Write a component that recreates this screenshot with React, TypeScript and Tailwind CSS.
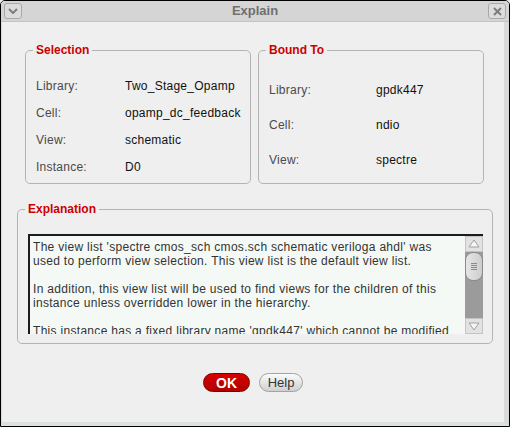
import React from 'react'

const selection = [
  ['Library:', 'Two_Stage_Opamp'],
  ['Cell:', 'opamp_dc_feedback'],
  ['View:', 'schematic'],
  ['Instance:', 'D0'],
]

const boundTo = [
  ['Library:', 'gpdk447'],
  ['Cell:', 'ndio'],
  ['View:', 'spectre'],
]

const explanation = [
  "The view list 'spectre cmos_sch cmos.sch schematic veriloga ahdl' was",
  'used to perform view selection. This view list is the default view list.',
  '',
  'In addition, this view list will be used to find views for the children of this',
  'instance unless overridden lower in the hierarchy.',
  '',
  "This instance has a fixed library name 'gpdk447' which cannot be modified",
]

function TitleButton({ children }: { children: React.ReactNode }) {
  return (
    <div className="w-[18px] h-[16px] rounded-[3px] border border-[#a9a9a9] bg-[#dcdcdc] flex items-center justify-center">
      {children}
    </div>
  )
}

function Group({
  title,
  className = '',
  children,
}: {
  title: string
  className?: string
  children: React.ReactNode
}) {
  return (
    <fieldset className={`border border-[#b4b4b4] rounded-[5px] ${className}`}>
      <legend className="ml-[7px] px-[3px] text-[12px] leading-[14px] font-bold text-[#cc0000]">
        {title}
      </legend>
      {children}
    </fieldset>
  )
}

function Scrollbar() {
  return (
    <div className="w-[18px] flex flex-col bg-[#9b9b9b]">
      <div className="h-[16px] bg-[#e2e2e2] border border-[#c4c4c4] flex items-center justify-center">
        <svg width="12" height="10" viewBox="0 0 12 10">
          <polygon points="6,1 11,8 1,8" fill="#f6f6f6" stroke="#a0a0a0" strokeWidth="1" />
        </svg>
      </div>
      <div className="h-[29px] rounded-[8px] border border-[#8a8a8a] bg-gradient-to-r from-[#e6e6e6] to-[#cdcdcd] flex flex-col items-center justify-center gap-[1px]">
        <div className="w-[6px] h-px bg-[#8a8a8a]" />
        <div className="w-[6px] h-px bg-[#8a8a8a]" />
        <div className="w-[6px] h-px bg-[#8a8a8a]" />
        <div className="w-[6px] h-px bg-[#8a8a8a]" />
      </div>
      <div className="flex-1" />
      <div className="h-[16px] bg-[#e2e2e2] border border-[#c4c4c4] flex items-center justify-center">
        <svg width="12" height="10" viewBox="0 0 12 10">
          <polygon points="1,2 11,2 6,9" fill="#f6f6f6" stroke="#a0a0a0" strokeWidth="1" />
        </svg>
      </div>
    </div>
  )
}

export default function App() {
  return (
    <div className="w-[510px] h-[427px] bg-[#efefef] font-['Liberation_Sans',Arial,sans-serif]">
      <div className="h-full flex flex-col border border-black rounded-t-[5px] overflow-hidden">
        {/* Title bar */}
        <div className="relative h-[21px] shrink-0 flex items-center justify-between px-[3px] bg-[#d5d5d5] border-b border-[#c3c3c3]">
          <TitleButton>
            <svg width="10" height="6" viewBox="0 0 10 6">
              <path d="M1 1 L5 5 L9 1" fill="none" stroke="#7c7c7c" strokeWidth="2" />
            </svg>
          </TitleButton>
          <span className="text-[13px] font-bold text-[#6f6f6f]">Explain</span>
          <TitleButton>
            <svg width="9" height="9" viewBox="0 0 9 9">
              <path d="M1 1 L8 8 M8 1 L1 8" fill="none" stroke="#7c7c7c" strokeWidth="2" />
            </svg>
          </TitleButton>
        </div>

        {/* Body */}
        <div className="flex-1 flex flex-col border-l border-l-[#d6dad6] border-r-[5px] border-r-[#d9dbd9] border-b-[4px] border-b-[#dde1dd]">
          <div className="flex gap-[7px] ml-[23px] mt-[21px]">
            <Group title="Selection" className="w-[226px] h-[141px]">
              <div className="pt-[15px] pl-[10px] flex flex-col text-[12px] tracking-[0.25px]">
                {selection.map(([k, v]) => (
                  <div key={k} className="h-[27px] flex items-center">
                    <span className="w-[89px] text-[#4a4a4a]">{k}</span>
                    <span className="text-[#111]">{v}</span>
                  </div>
                ))}
              </div>
            </Group>
            <Group title="Bound To" className="w-[226px] h-[141px]">
              <div className="pt-[15px] pl-[10px] flex flex-col text-[12px] tracking-[0.25px]">
                {boundTo.map(([k, v]) => (
                  <div key={k} className="h-[35px] flex items-center">
                    <span className="w-[107px] text-[#4a4a4a]">{k}</span>
                    <span className="text-[#111]">{v}</span>
                  </div>
                ))}
              </div>
            </Group>
          </div>

          <Group title="Explanation" className="ml-[15px] mt-[18px] w-[476px] h-[142px]">
            <div className="ml-[10px] mt-[18px] w-[455px] h-[100px] flex border-t-2 border-l-2 border-[#1c1c1c] bg-[#f5f9f5]">
              <div className="flex-1 overflow-hidden pl-[3px] pt-[4px] text-[12px] leading-[14px] tracking-[0.3px] text-[#333]">
                {explanation.map((line, i) => (
                  <div key={i} className="h-[14px] whitespace-nowrap">
                    {line}
                  </div>
                ))}
              </div>
              <Scrollbar />
            </div>
          </Group>

          <div className="mt-[29px] flex justify-center gap-[9px]">
            <button className="w-[47px] h-[19px] rounded-full border border-[#7d0000] bg-gradient-to-b from-[#d80000] to-[#b00000] text-white text-[14px] font-bold leading-none">
              OK
            </button>
            <button className="w-[44px] h-[19px] rounded-full border border-[#a3a3a3] bg-gradient-to-b from-[#fbfbfb] to-[#cfcfcf] text-[#333] text-[13px] leading-none">
              Help
            </button>
          </div>
        </div>
      </div>
    </div>
  )
}
